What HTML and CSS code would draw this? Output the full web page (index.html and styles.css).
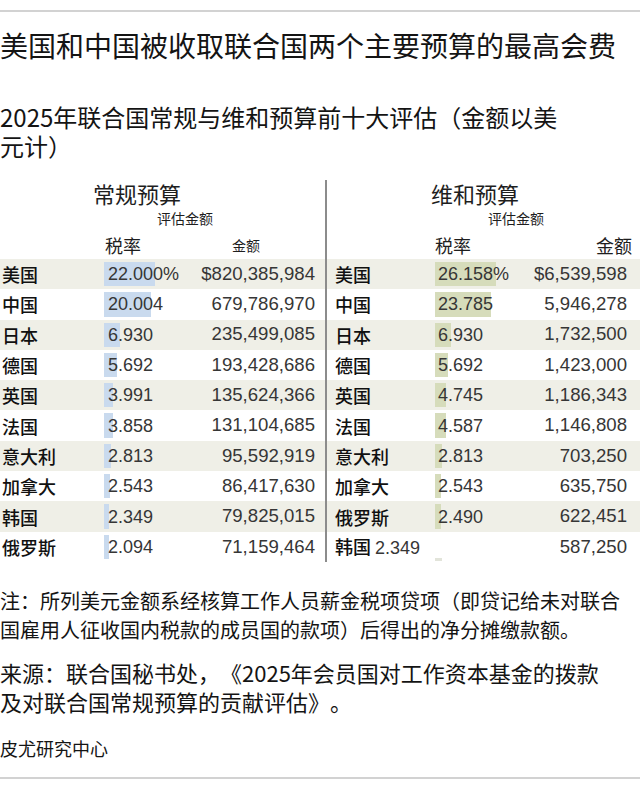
FILE: index.html
```html
<!DOCTYPE html>
<html lang="zh-CN">
<head>
<meta charset="utf-8">
<title>联合国预算评估</title>
<link rel="stylesheet" href="styles.css">
</head>
<body>
<div class="page">
  <div class="rule"></div>
  <h1 class="title">美国和中国被收取联合国两个主要预算的最高会费</h1>
  <h2 class="subtitle">2025年联合国常规与维和预算前十大评估（金额以美<br>元计）</h2>

  <div class="tables">
    <section class="panel panel-left">
      <div class="panel-title">常规预算</div>
      <div class="panel-sub">评估金额</div>
      <div class="cols"><span class="col-rate">税率</span><span class="col-amt">金额</span></div>

      <div class="row shade"><span class="country">美国</span><span class="rate"><span class="bar" style="width:51px"></span><span class="val">22.000%</span></span><span class="amt">$820,385,984</span></div>
      <div class="row"><span class="country">中国</span><span class="rate"><span class="bar" style="width:47px"></span><span class="val">20.004</span></span><span class="amt">679,786,970</span></div>
      <div class="row shade"><span class="country">日本</span><span class="rate"><span class="bar" style="width:16px"></span><span class="val">6.930</span></span><span class="amt">235,499,085</span></div>
      <div class="row"><span class="country">德国</span><span class="rate"><span class="bar" style="width:13px"></span><span class="val">5.692</span></span><span class="amt">193,428,686</span></div>
      <div class="row shade"><span class="country">英国</span><span class="rate"><span class="bar" style="width:9px"></span><span class="val">3.991</span></span><span class="amt">135,624,366</span></div>
      <div class="row"><span class="country">法国</span><span class="rate"><span class="bar" style="width:9px"></span><span class="val">3.858</span></span><span class="amt">131,104,685</span></div>
      <div class="row shade"><span class="country">意大利</span><span class="rate"><span class="bar" style="width:7px"></span><span class="val">2.813</span></span><span class="amt">95,592,919</span></div>
      <div class="row"><span class="country">加拿大</span><span class="rate"><span class="bar" style="width:6px"></span><span class="val">2.543</span></span><span class="amt">86,417,630</span></div>
      <div class="row shade"><span class="country">韩国</span><span class="rate"><span class="bar" style="width:5px"></span><span class="val">2.349</span></span><span class="amt">79,825,015</span></div>
      <div class="row"><span class="country">俄罗斯</span><span class="rate"><span class="bar" style="width:5px"></span><span class="val">2.094</span></span><span class="amt">71,159,464</span></div>
    </section>

    <section class="panel panel-right">
      <div class="panel-title">维和预算</div>
      <div class="panel-sub">评估金额</div>
      <div class="cols"><span class="col-rate">税率</span><span class="col-amt">金额</span></div>

      <div class="row shade"><span class="country">美国</span><span class="rate"><span class="bar" style="width:61px"></span><span class="val">26.158%</span></span><span class="amt">$6,539,598</span></div>
      <div class="row"><span class="country">中国</span><span class="rate"><span class="bar" style="width:56px"></span><span class="val">23.785</span></span><span class="amt">5,946,278</span></div>
      <div class="row shade"><span class="country">日本</span><span class="rate"><span class="bar" style="width:16px"></span><span class="val">6.930</span></span><span class="amt">1,732,500</span></div>
      <div class="row"><span class="country">德国</span><span class="rate"><span class="bar" style="width:13px"></span><span class="val">5.692</span></span><span class="amt">1,423,000</span></div>
      <div class="row shade"><span class="country">英国</span><span class="rate"><span class="bar" style="width:11px"></span><span class="val">4.745</span></span><span class="amt">1,186,343</span></div>
      <div class="row"><span class="country">法国</span><span class="rate"><span class="bar" style="width:11px"></span><span class="val">4.587</span></span><span class="amt">1,146,808</span></div>
      <div class="row shade"><span class="country">意大利</span><span class="rate"><span class="bar" style="width:7px"></span><span class="val">2.813</span></span><span class="amt">703,250</span></div>
      <div class="row"><span class="country">加拿大</span><span class="rate"><span class="bar" style="width:6px"></span><span class="val">2.543</span></span><span class="amt">635,750</span></div>
      <div class="row shade"><span class="country">俄罗斯</span><span class="rate"><span class="bar" style="width:6px"></span><span class="val">2.490</span></span><span class="amt">622,451</span></div>
      <div class="row"><span class="country">韩国 <span class="num">2.349</span></span><span class="rate"><span class="bar bar-stub" style="width:7px"></span></span><span class="amt">587,250</span></div>
    </section>
  </div>

  <p class="note">注：所列美元金额系经核算工作人员薪金税项贷项（即贷记给未对联合<br>国雇用人征收国内税款的成员国的款项）后得出的净分摊缴款额。</p>
  <p class="source">来源：联合国秘书处，《2025年会员国对工作资本基金的拨款<br>及对联合国常规预算的贡献评估》。</p>
  <p class="credit">皮尤研究中心</p>
  <div class="rule rule-bottom"></div>
</div>
</body>
</html>
```

FILE: styles.css
```css
* {
  box-sizing: border-box;
  margin: 0;
  padding: 0;
}

body {
  margin: 0;
  background: #ffffff;
  font-family: "Noto Sans CJK SC", "Noto Sans", sans-serif;
  color: #1a1a1a;
  text-spacing-trim: space-all;
}

.page {
  width: 640px;
  padding-top: 10px;
}

.rule {
  height: 2px;
  background: #d2d2d2;
}

.rule-bottom {
  margin-top: 17px;
}

.title {
  font-size: 28px;
  font-weight: 400;
  line-height: 34px;
  margin-top: 16px;
  color: #141414;
}

.subtitle {
  font-size: 24px;
  font-weight: 400;
  line-height: 29px;
  margin-top: 40px;
  color: #141414;
}

.tables {
  display: grid;
  grid-template-columns: 325px 315px;
  margin-top: 20px;
}

.panel-right {
  border-left: 2px solid #8c8c8c;
}

.panel-title {
  font-size: 22px;
  line-height: 26px;
  color: #1e1e1e;
}

.panel-left .panel-title { padding-left: 93px; }
.panel-right .panel-title { padding-left: 104px; }

.panel-sub {
  font-size: 14px;
  line-height: 24px;
  color: #1e1e1e;
}

.panel-left .panel-sub { padding-left: 157px; }
.panel-right .panel-sub { padding-left: 161px; }

.cols {
  display: flex;
  align-items: center;
  height: 29px;
  color: #1e1e1e;
}

.col-rate {
  font-size: 18px;
}

.panel-left .col-rate { margin-left: 105px; }
.panel-left .col-amt { margin-left: 91px; font-size: 14px; }

.panel-right .col-rate { margin-left: 108px; }
.panel-right .col-amt { margin-left: auto; margin-right: 8px; font-size: 18px; }

.row {
  display: grid;
  height: 30.3px;
  align-items: center;
}

.panel-left .row {
  grid-template-columns: 102px 1fr auto;
  padding: 0 10px 0 2px;
}

.panel-right .row {
  grid-template-columns: 100px 1fr auto;
  padding: 0 13px 0 8px;
}

.shade {
  background: #efefe7;
}

.country {
  font-size: 18px;
  font-weight: 500;
  line-height: 1;
  color: #111111;
  white-space: nowrap;
}

.num,
.val,
.amt {
  font-family: "Liberation Sans", Arial, sans-serif;
  font-size: 18px;
  font-weight: 400;
  color: #363636;
}

.amt {
  font-size: 18.6px;
}

.rate {
  position: relative;
  height: 100%;
  display: flex;
  align-items: center;
}

.bar {
  position: absolute;
  left: 0;
  top: 3px;
  bottom: 3px;
}

.panel-left .bar { background: #c9daee; }
.panel-right .bar { background: #d6dcbb; }

.panel-right .bar-stub {
  top: auto;
  height: 3px;
  bottom: 1px;
  background: #e2e4da;
}

.val {
  position: relative;
  line-height: 1;
}

.panel-left .val { padding-left: 4px; }
.panel-right .val { padding-left: 3px; }

.amt {
  text-align: right;
  line-height: 1;
}

.note {
  font-size: 20px;
  line-height: 29px;
  margin-top: 24px;
  color: #141414;
}

.source {
  font-size: 22px;
  line-height: 29px;
  margin-top: 14px;
  color: #141414;
}

.credit {
  font-size: 18px;
  line-height: 24px;
  margin-top: 20px;
  color: #141414;
}
```
